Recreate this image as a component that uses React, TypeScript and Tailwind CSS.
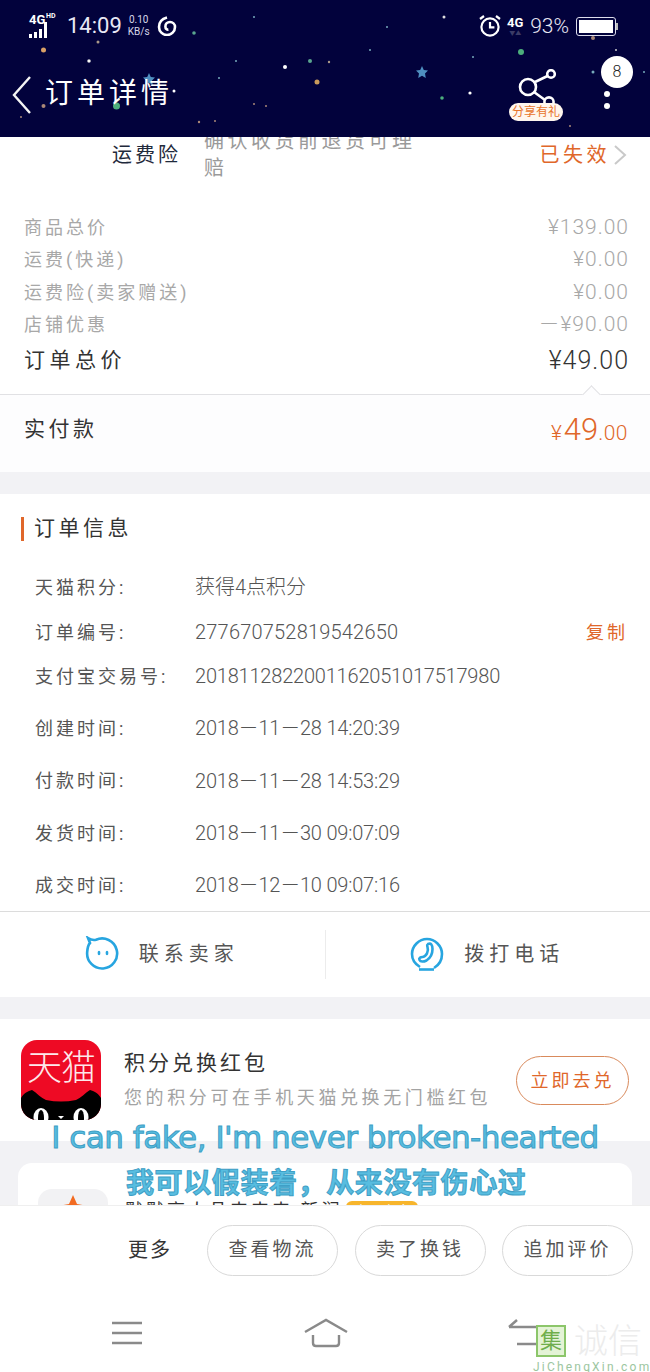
import React from "react";

const stars: [number, number, number, string][] = [
  [43.5, 50, 2.5, "#d9a066"], [89, 61, 1.8, "#ddd"], [98, 42, 1.5, "#a98"], [194, 33, 1.8, "#5aa58f"], [43.5, 106, 2, "#a87"],
  [116.5, 106, 3.5, "#4cae7c"], [285, 67, 2, "#fff"], [310, 61, 2, "#5aa58f"], [317, 82, 2.5, "#c99b5c"], [329, 62, 1.2, "#a98"],
  [442, 98, 1.8, "#4cae7c"], [470, 93, 1.6, "#fff"], [521, 52, 3, "#4cae7c"], [444, 17, 1.5, "#ddd"], [593, 38, 2, "#a87"],
  [593, 72, 1.5, "#7ab"], [644, 72, 1, "#7ab"], [387, 27, 1, "#7ab"], [370, 50, 1, "#7ab"], [199, 122, 1.2, "#a87"],
  [215, 121, 1, "#a87"], [254, 104, 1, "#a87"], [266, 106, 1, "#a87"], [174, 91, 1.5, "#fff"], [570, 126, 1, "#a87"],
  [616, 50, 1, "#ccc"], [254, 17, 1, "#7ab"], [236, 61, 1, "#7ab"], [219, 78, 1, "#7ab"], [21, 117, 1, "#a87"],
  [473, 57, 1, "#7ab"], [89, 61, 1, "#fff"],
];

const fees = [
  ["商品总价", "¥139.00"],
  ["运费(快递)", "¥0.00"],
  ["运费险(卖家赠送)", "¥0.00"],
  ["店铺优惠", "－¥90.00"],
];

const orderRows = [
  { label: "天猫积分:", value: "获得4点积分", h: "h-[46px]" },
  { label: "订单编号:", value: "277670752819542650", h: "h-[44px] tracking-[0.2px]", copy: true },
  { label: "支付宝交易号:", value: "2018112822001162051017517980", h: "h-[44px] mb-[4px] tracking-[-0.2px]" },
  { label: "创建时间:", value: "2018－11－28 14:20:39", h: "h-[52px] tracking-[-0.2px]" },
  { label: "付款时间:", value: "2018－11－28 14:53:29", h: "h-[53px] tracking-[-0.2px]" },
  { label: "发货时间:", value: "2018－11－30 09:07:09", h: "h-[52px] tracking-[-0.2px]" },
  { label: "成交时间:", value: "2018－12－10 09:07:16", h: "h-[52px] tracking-[-0.2px]" },
];

function StatusBar() {
  return (
    <div className="relative flex h-[50px] items-center pl-[29px] pr-[32px] pt-[2px] text-white">
      <div className="relative h-[28px] w-[32px]">
        <span className="absolute left-0 top-[1px] text-[13px] font-bold leading-[14px]">4G</span>
        <span className="absolute left-[17px] top-[0px] text-[7px] font-bold leading-[8px]">HD</span>
        <div className="absolute bottom-[2px] left-0 flex items-end gap-[2px]">
          <div className="h-[4px] w-[3px] bg-white" />
          <div className="h-[6px] w-[3px] bg-white" />
          <div className="h-[9px] w-[3px] bg-white" />
          <div className="h-[16px] w-[3px] bg-white" />
        </div>
      </div>
      <span className="ml-[6px] text-[22px] leading-none text-[#e8e8f4]">14:09</span>
      <div className="ml-[6px] flex flex-col items-center text-[10px] leading-[12px] text-[#d8d8e8]">
        <span>0.10</span>
        <span>KB/s</span>
      </div>
      <svg className="ml-[7px]" width="20" height="20" viewBox="0 0 20 20" fill="none" stroke="#fff" strokeWidth="2.6">
        <path d="M10 1.6C5 3 2 6.5 2 11a8 8 0 0 0 16 0c0-3-2.4-5-5-5s-4.6 2-4.6 4.4 1.6 3.4 3 3.2" />
      </svg>
      <div className="flex-1" />
      <svg width="24" height="24" viewBox="0 0 24 24" fill="none" stroke="#fff" strokeWidth="2.2">
        <circle cx="12" cy="13" r="8.6" />
        <path d="M12 8v5.4h4.4M2 5l4-3M22 5l-4-3" />
      </svg>
      <div className="ml-[4px] flex w-[18px] flex-col items-center">
        <span className="text-[13px] font-bold leading-[14px]">4G</span>
        <span className="text-[6px] leading-[6px] text-[#3b3b66]">▼▲</span>
      </div>
      <span className="ml-[6px] text-[21px] font-light leading-none text-[#e8e8f4]">93%</span>
      <div className="ml-[7px] flex items-center">
        <div className="h-[19px] w-[40px] rounded-[3px] border border-[#dcdcec] p-[2px]">
          <div className="h-full w-full bg-white" />
        </div>
        <div className="h-[7px] w-[2px] bg-[#bbb]" />
      </div>
    </div>
  );
}

function NavBar() {
  return (
    <div className="relative flex h-[87px] items-start pl-[11px] text-white">
      <svg className="mt-[25px]" width="22" height="40" viewBox="0 0 22 40" fill="none" stroke="#f4f4f4" strokeWidth="2.4">
        <path d="M19 2 3 20l16 18" />
      </svg>
      <span className="ml-[12px] mt-[24px] text-[28px] leading-[40px] tracking-[4px]">订单详情</span>
      <div className="absolute left-[509px] top-[19px] flex h-[52px] w-[54px] justify-center">
        <svg width="44" height="44" viewBox="0 0 44 44" fill="none" stroke="#fff" strokeWidth="2.6">
          <circle cx="14" cy="18" r="8" />
          <circle cx="37" cy="5" r="3.8" />
          <circle cx="35" cy="33" r="4.6" />
          <path d="m21 13 12.500-6M20 23l11 8" />
        </svg>
        <span className="absolute bottom-0 left-0 h-[18px] w-[54px] rounded-full bg-[#fff6ee] text-center text-[12px] leading-[18px] text-[#e8742b]">
          分享有礼
        </span>
      </div>
      <div className="absolute left-[601px] top-[6px] flex h-[32px] w-[32px] items-center justify-center rounded-full bg-white text-[16px] font-light text-[#222]">
        8
      </div>
      <div className="absolute left-[604px] top-[41px] flex flex-col gap-[6px]">
        <div className="h-[6px] w-[6px] rounded-full bg-white" />
        <div className="h-[6px] w-[6px] rounded-full bg-white" />
      </div>
    </div>
  );
}

function Header() {
  return (
    <header className="relative h-[137px] shrink-0 overflow-hidden bg-[#02023c]">
      <svg className="absolute inset-0" width="650" height="137" viewBox="0 0 650 137">
        {stars.map(([x, y, r, c], i) => (
          <circle key={i} cx={x} cy={y} r={r} fill={c} />
        ))}
        <path d="m422 66 1.800 4 4.200.5-3 3 .8 4.500-3.800-2.200-3.800 2.200.8-4.500-3-3 4.200-.5z" fill="#4f8fc0" />
        <path d="m149 73 1.800 4 4.200.5-3 3 .8 4.500-3.800-2.200-3.800 2.200.8-4.500-3-3 4.200-.5z" fill="#4f8fc0" />
      </svg>
      <div className="relative">
        <StatusBar />
        <NavBar />
      </div>
    </header>
  );
}

function InsuranceRow() {
  return (
    <div className="flex h-[74px] shrink-0 items-start overflow-hidden bg-white">
      <span className="ml-[112px] mt-[2px] w-[92px] text-[20px] leading-[32px] tracking-[3px] text-[#1f2a3c]">运费险</span>
      <div className="-mt-[9px] w-[220px] text-[20px] leading-[27px] tracking-[3.500px] text-[#9a9a9a]">
        确认收货前退货可理赔
      </div>
      <div className="ml-auto mr-[23px] mt-[2px] flex items-center">
        <span className="text-[20px] leading-[32px] tracking-[3.500px] text-[#e0672a]">已失效</span>
        <svg className="ml-[3px]" width="14" height="22" viewBox="0 0 14 22" fill="none" stroke="#c9c9c9" strokeWidth="2">
          <path d="m2 2 10 9-10 9" />
        </svg>
      </div>
    </div>
  );
}

function PriceBlock() {
  return (
    <section className="shrink-0 bg-white">
      <div className="pl-[24px] pr-[21px]">
        {fees.map(([name, price]) => (
          <div key={name} className="flex h-[32.500px] items-center justify-between text-[#a8a8a8]">
            <span className="text-[18px] tracking-[3px]">{name}</span>
            <span className="text-[21px] font-light tracking-[1px]">{price}</span>
          </div>
        ))}
        <div className="flex h-[40px] items-center justify-between text-[#333]">
          <span className="text-[21px] tracking-[4.500px]">订单总价</span>
          <span className="text-[25px] font-light tracking-[1px]">¥49.00</span>
        </div>
      </div>
      <div className="h-[13px]" />
      <div className="relative h-[78px] border-t border-[#e1e1e4] bg-[#fdfdfe] pl-[24px] pr-[22px]">
        <div className="absolute -top-[7px] left-[585px] h-[13px] w-[13px] rotate-45 border-l border-t border-[#e1e1e4] bg-[#fdfdfe]" />
        <div className="flex h-[70px] items-center justify-between">
          <span className="text-[21px] tracking-[3.500px] text-[#333]">实付款</span>
          <span className="font-light text-[#e0672a]">
            <span className="mr-[2px] text-[21px]">¥</span>
            <span className="text-[31px]">49</span>
            <span className="text-[21px] tracking-[0.5px]">.00</span>
          </span>
        </div>
      </div>
    </section>
  );
}

function OrderInfo() {
  return (
    <section className="shrink-0 bg-white">
      <div className="flex h-[70px] items-center pl-[21px]">
        <div className="h-[24px] w-[3px] bg-[#e0672a]" />
        <span className="ml-[10px] text-[21px] tracking-[3.500px] text-[#333]">订单信息</span>
      </div>
      {orderRows.map((row) => (
        <div key={row.label} className={`flex items-center pl-[35px] pr-[22px] ${row.h}`}>
          <span className="w-[160px] shrink-0 text-[18px] tracking-[3px] text-[#555]">{row.label}</span>
          <span className="text-[20px] font-light text-[#555]">{row.value}</span>
          {row.copy && <span className="ml-auto text-[18px] tracking-[3px] text-[#e0672a]">复制</span>}
        </div>
      ))}
      <div className="flex h-[86px] border-t border-[#dcdcdc]">
        <div className="flex flex-1 items-center justify-center gap-[19px] pb-[2px] pr-[2px]">
          <svg width="36" height="36" viewBox="0 0 36 36" fill="none" stroke="#27a5e0" strokeWidth="2.600">
            <path d="M4 2c3 2 5 2.500 8 1.800A15 15 0 1 1 3.200 16C3.500 12 4 9 6 7z" />
            <ellipse cx="15" cy="17" rx="1.400" ry="2.200" fill="#27a5e0" stroke="none" />
            <ellipse cx="23" cy="17" rx="1.400" ry="2.200" fill="#27a5e0" stroke="none" />
          </svg>
          <span className="text-[20px] tracking-[5px] text-[#555]">联系卖家</span>
        </div>
        <div className="my-[18px] w-px bg-[#ececec]" />
        <div className="flex flex-1 items-center justify-center gap-[19px] pb-[2px] pr-[2px]">
          <svg width="36" height="36" viewBox="0 0 36 36" fill="none" stroke="#27a5e0" strokeWidth="2.600">
            <path d="M11 31C6 28 3 23.500 3 18 3 10 10 3 18 3s15 7 15 15c0 6-3 11-8 14" />
            <path d="M19 8c3-1.500 4.500 1 4.500 5s-2 9-6 11.500c-3 1.500-6 1.500-7-.5s1-3 3-3 3-1 4.500-3.500c1.500-3 1-5 .5-6.500S17.500 9 19 8z" />
            <path d="M10 33.500h15" />
          </svg>
          <span className="text-[20px] tracking-[5px] text-[#555]">拨打电话</span>
        </div>
      </div>
    </section>
  );
}

function TmallLogo() {
  return (
    <div className="relative h-[80px] w-[80px] shrink-0 overflow-hidden rounded-[16px] bg-[#ee0a24]">
      <span className="absolute left-0 right-0 top-[6px] text-center text-[35px] font-light leading-[46px] tracking-[-1px] text-[#fde8ea]">
        天猫
      </span>
      <svg className="absolute bottom-0 left-0" width="80" height="30" viewBox="0 0 80 30">
        <path d="M0 8C3 3 7 1 11 0c5 3 9 8 14 10 10 2 20 2 30 0 5-2 9-7 14-10 4 1 8 3 11 8v22H0z" fill="#000" />
        <ellipse cx="20" cy="27" rx="7.500" ry="9" fill="#fff" />
        <ellipse cx="60" cy="27" rx="7.500" ry="9" fill="#fff" />
        <ellipse cx="20" cy="28" rx="3" ry="8" fill="#000" />
        <ellipse cx="60" cy="28" rx="3" ry="8" fill="#000" />
        <path d="m37 26 6 0-3 3z" fill="#fff" />
      </svg>
    </div>
  );
}

function PointsCard() {
  return (
    <section className="flex h-[122px] shrink-0 items-start bg-white pl-[21px] pr-[21px] pt-[21px]">
      <TmallLogo />
      <div className="ml-[23px] min-w-0 flex-1">
        <div className="h-[32px] text-[21px] leading-[46px] tracking-[3px] text-[#333]">积分兑换红包</div>
        <div className="mt-[8px] whitespace-nowrap text-[18px] leading-[36px] tracking-[3.600px] text-[#a3a3a3]">
          您的积分可在手机天猫兑换无门槛红包
        </div>
      </div>
      <div className="mt-[16px] flex h-[49px] w-[113px] shrink-0 items-center justify-center rounded-full border border-[#d98a5c] text-[18px] tracking-[3px] text-[#e0672a]">
        立即去兑
      </div>
    </section>
  );
}

function RecommendCard() {
  return (
    <section className="flex-1 bg-[#f2f2f5] px-[18px] pt-[22px]">
      <div className="flex h-[120px] items-start rounded-[14px] bg-white pl-[20px] pt-[26px]">
        <div className="flex h-[70px] w-[70px] justify-center rounded-[14px] bg-[#f2f2f4] pt-[6px]">
          <svg width="34" height="30" viewBox="0 0 34 30">
            <path d="M17 0 21 9l11 2-9 7 3 11-9-6-9 6 3-11-9-7 11-2z" fill="#f26b21" />
          </svg>
        </div>
        <div className="ml-[17px] mt-[10px] flex items-start">
          <span className="text-[18px] leading-[24px] tracking-[3px] text-[#333]">默默高人品来来来 新润</span>
          <span className="ml-[4px] mt-[2px] h-[20px] w-[72px] rounded-[6px] bg-[#f7b52c] text-center text-[14px] leading-[20px] text-white">上品专享</span>
        </div>
      </div>
    </section>
  );
}

function BottomBar() {
  return (
    <footer className="h-[167px] shrink-0 border-t border-[#efefef] bg-white">
      <div className="flex h-[102px] items-start pr-[17px] pt-[19px]">
        <span className="ml-[128px] mr-[35px] mt-[9px] whitespace-nowrap text-[20px] leading-[32px] tracking-[2px] text-[#333]">更多</span>
        <div className="flex gap-[16.500px]">
          {["查看物流", "卖了换钱", "追加评价"].map((b) => (
            <div key={b} className="flex h-[51px] w-[131px] items-center justify-center rounded-full border border-[#d9d9d9] text-[19px] tracking-[3px] text-[#555]">
              {b}
            </div>
          ))}
        </div>
      </div>
      <div className="flex h-[50px] items-center">
        <svg className="ml-[112px]" width="30" height="24" viewBox="0 0 30 24" stroke="#8a8a8a" strokeWidth="2.500">
          <path d="M0 2h30M0 12h30M0 22h30" />
        </svg>
        <svg className="ml-[162px]" width="44" height="30" viewBox="0 0 44 30" fill="none" stroke="#8a8a8a" strokeWidth="2.400">
          <path d="M1 14 22 2l21 12M9 17v8c0 2 1 3 3 3h20c2 0 3-1 3-3v-8" />
        </svg>
        <svg className="ml-[159px]" width="36" height="30" viewBox="0 0 36 30" fill="none" stroke="#8a8a8a" strokeWidth="2.500">
          <path d="M2 9h27M10 2 2 9M10 26h20" />
        </svg>
      </div>
    </footer>
  );
}

function Watermark() {
  return (
    <div className="absolute left-[533px] top-[1324px] w-[117px]">
      <div className="flex h-[34px] items-center">
        <div className="ml-[3px] flex h-[32px] w-[30px] shrink-0 items-center justify-center border-2 border-[#8cc66a] bg-[#e4f3d6] text-[22px] leading-none text-[#6fae4c]">
          集
        </div>
        <span className="ml-[8px] whitespace-nowrap text-[34px] font-light leading-[34px] text-[#ececec]">诚信</span>
      </div>
      <div className="mt-[2px] whitespace-nowrap text-[12px] leading-[14px] tracking-[2.200px] text-[#9cc6a0]">JiChengXin.com</div>
    </div>
  );
}

export default function App() {
  return (
    <div className="relative flex h-[1372px] w-[650px] flex-col overflow-hidden bg-[#f2f2f5] font-['Roboto','Noto_Sans_CJK_SC',sans-serif]">
      <Header />
      <main className="flex min-h-0 flex-1 flex-col overflow-hidden">
        <InsuranceRow />
        <PriceBlock />
        <div className="h-[22px] shrink-0" />
        <OrderInfo />
        <div className="h-[22px] shrink-0" />
        <PointsCard />
        <RecommendCard />
      </main>
      <BottomBar />

      {/* subtitles burned into the screenshot */}
      <div className="absolute left-0 top-[1118px] w-full whitespace-nowrap text-center font-['DejaVu_Sans','Noto_Sans_CJK_SC',sans-serif] text-[31px] leading-[38px] tracking-[-0.5px] text-[#58bde0] [-webkit-text-stroke:1px_#3f9fc6]">
        I can fake, I'm never broken-hearted
      </div>
      <div className="absolute left-[126px] top-[1166px] whitespace-nowrap text-[28px] font-bold leading-[36px] tracking-[0.6px] text-[#58bde0] [-webkit-text-stroke:1px_#3f9fc6]">
        我可以假装着，从来没有伤心过
      </div>
      <Watermark />
    </div>
  );
}
